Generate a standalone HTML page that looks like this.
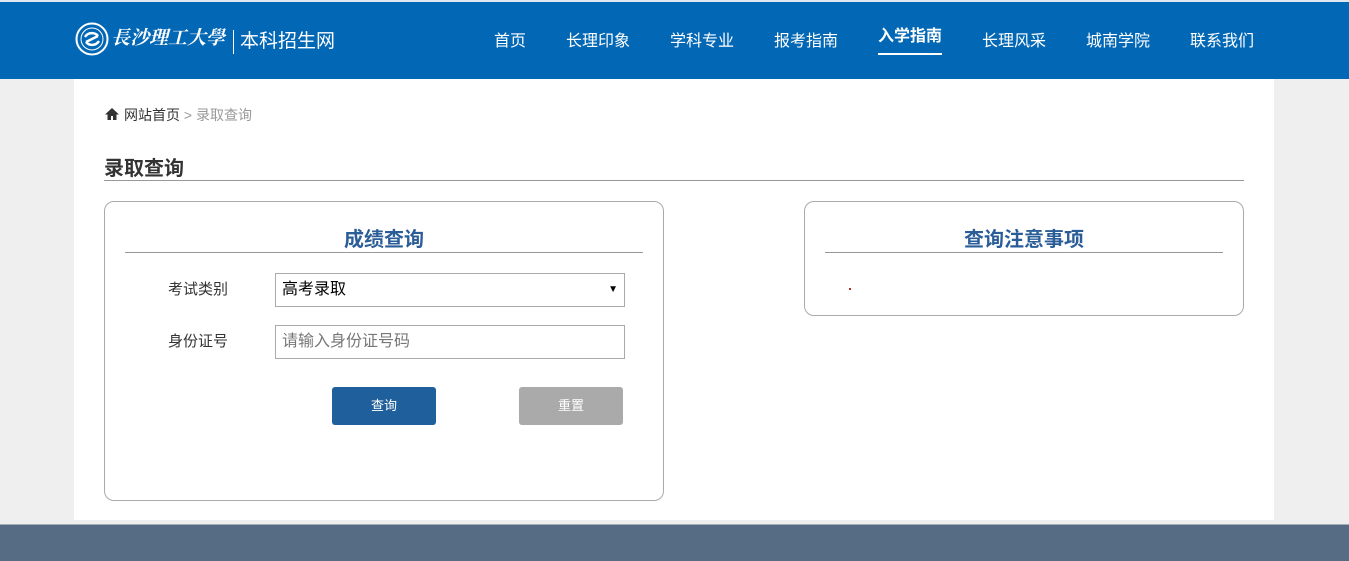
<!DOCTYPE html>
<html><head><meta charset="utf-8"><style>
*{margin:0;padding:0;box-sizing:border-box}
body{width:1349px;height:561px;overflow:hidden;background:#efefef;font-family:"Liberation Sans","Noto Sans CJK SC",sans-serif;position:relative}
.hd{position:absolute;left:0;top:0;width:1349px;height:79px;background:#0267b5;border-top:2px solid #dfe8f0}
.nav a{position:absolute;top:25px;color:#fff;font-size:16px;text-decoration:none;white-space:nowrap}
.main{position:absolute;left:74px;top:79px;width:1200px;height:441px;background:#fff}
.ft{position:absolute;left:0;top:524px;width:1349px;height:37px;background:#566c84;border-top:1px solid #a6adb5}
.abs{position:absolute}
.panel{position:absolute;border:1px solid #aaa;border-radius:10px;background:#fff}
.ptitle{position:absolute;font-size:20px;font-weight:bold;color:#2b5e98;text-align:center}
.pline{position:absolute;height:1px;background:#999}
.lbl{position:absolute;font-size:15px;color:#333}
.inp{position:absolute;border:1px solid #aaa;background:#fff;font-size:16px;padding-left:6px;line-height:32px}
.btn{position:absolute;color:#fff;font-size:13px;text-align:center;line-height:38px;border-radius:3px}
</style></head><body>
<div class="hd">
 <svg class="abs" style="left:75px;top:20px" width="34" height="34" viewBox="0 0 34 34"><circle cx="17" cy="17" r="15.5" fill="none" stroke="#fff" stroke-width="2"/><circle cx="17" cy="17" r="11" fill="none" stroke="#fff" stroke-width="1"/><path d="M10 15c3-5 10-5 13-1M24 19c-3 5-10 5-13 1M11 20l12-6" stroke="#fff" stroke-width="2.5" fill="none"/></svg>
 <div class="abs" style="left:111px;top:21px;color:#fff;font-size:19px;font-family:'Noto Serif CJK SC',serif;font-style:italic;font-weight:bold;width:118px;white-space:nowrap">長沙理工大學</div>
 <div class="abs" style="left:233px;top:28px;width:1px;height:24px;background:#fff"></div>
 <div class="abs" style="left:240px;top:24px;color:#fff;font-size:19px">本科招生网</div>
 <div class="nav">
 <a style="left:494px">首页</a><a style="left:566px">长理印象</a><a style="left:670px">学科专业</a><a style="left:774px">报考指南</a>
 <a style="left:878px;top:20px;font-weight:bold">入学指南</a>
 <a style="left:982px">长理风采</a><a style="left:1086px">城南学院</a><a style="left:1190px">联系我们</a>
 </div>
 <div class="abs" style="left:878px;top:51px;width:64px;height:2px;background:#fff"></div>
</div>
<div class="main"></div>
<svg class="abs" style="left:104px;top:107px" width="16" height="14" viewBox="0 0 16 14"><path d="M8 1L1 7.5h2.5V13h3.5V9h2v4h3.5V7.5H15z" fill="#333"/></svg>
<div class="abs" style="left:124px;top:105px;font-size:14px;color:#333">网站首页 <span style="color:#999">&gt; 录取查询</span></div>
<div class="abs" style="left:104px;top:152px;font-size:20px;font-weight:bold;color:#333">录取查询</div>
<div class="abs" style="left:104px;top:180px;width:1140px;height:1px;background:#999"></div>

<div class="panel" style="left:104px;top:201px;width:560px;height:300px"></div>
<div class="ptitle" style="left:104px;top:223px;width:560px">成绩查询</div>
<div class="pline" style="left:125px;top:252px;width:518px"></div>
<div class="lbl" style="left:168px;top:278px">考试类别</div>
<div class="inp" style="left:275px;top:273px;width:350px;height:34px;color:#000">高考录取<span style="position:absolute;right:6px;font-size:10px">▼</span></div>
<div class="lbl" style="left:168px;top:330px">身份证号</div>
<div class="inp" style="left:275px;top:325px;width:350px;height:34px;color:#777">请输入身份证号码</div>
<div class="btn" style="left:332px;top:387px;width:104px;height:38px;background:#1f5f9c">查询</div>
<div class="btn" style="left:519px;top:387px;width:104px;height:38px;background:#aaa">重置</div>

<div class="panel" style="left:804px;top:201px;width:440px;height:115px"></div>
<div class="ptitle" style="left:804px;top:223px;width:440px">查询注意事项</div>
<div class="pline" style="left:825px;top:252px;width:398px"></div>
<div class="abs" style="left:849px;top:288px;width:2px;height:2px;background:#a33"></div>
<div class="ft"></div>
</body></html>
